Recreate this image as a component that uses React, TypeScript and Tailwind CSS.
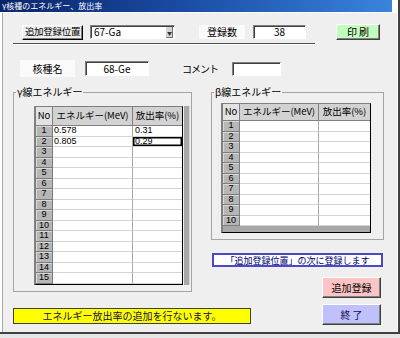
import React from 'react'

const raised =
  'flex items-center justify-center whitespace-nowrap border border-t-white border-l-white border-r-[#404040] border-b-[#404040] shadow-[inset_-1px_-1px_0_#808080]'
const sunken =
  'flex items-center border border-t-[#808080] border-l-[#808080] border-r-white border-b-white shadow-[inset_1px_1px_0_#404040] bg-white'

type GridProps = {
  rows: number
  head: string
  cols: [string, string, string]
  data: Record<number, [string, string]>
  focus?: number
  band?: boolean
}

function Grid({ rows, head, cols, data, focus, band }: GridProps) {
  const list = Array.from({ length: rows }, (_, i) => i + 1)
  return (
    <div className="flex flex-col border-l-2 border-t border-[#808080] border-r border-r-black border-b border-b-black">
      <div className={`flex ${head} border-b border-[#808080] text-[9.5px]`}>
        <div className={`${cols[0]} flex items-center justify-center bg-[#e2e2e2] border-r border-[#808080]`}>No</div>
        <div className={`${cols[1]} flex items-center justify-center bg-[#d2d2d2] border-r border-[#808080]`}>エネルギー(MeV)</div>
        <div className={`${cols[2]} flex items-center justify-center bg-[#d2d2d2]`}>放出率(%)</div>
      </div>
      {list.map((n) => (
        <div key={n} className="flex h-[10.5px] font-['Liberation_Sans',sans-serif] text-[9px] leading-[9px]">
          <div
            className={`${cols[0]} flex items-center justify-center bg-[#b6b6b6] border-r border-b border-[#7c7c7c] shadow-[inset_1px_1px_0_#d8d8d8]`}
          >
            {n}
          </div>
          <div className={`${cols[1]} flex items-center pl-px bg-white border-r border-r-[#a8a8a8] border-b border-b-[#d4d4d4]`}>
            {data[n]?.[0] ?? ''}
          </div>
          <div
            className={`${cols[2]} flex items-center pl-[2px] bg-white border-b border-b-[#d4d4d4] ${
              focus === n ? 'shadow-[inset_0_0_0_1.5px_#000]' : ''
            }`}
          >
            {data[n]?.[1] ?? ''}
          </div>
        </div>
      ))}
      {band && <div className="h-[6px] bg-[#a8a8a8]" />}
    </div>
  )
}

export default function App() {
  return (
    <div className="w-[400px] h-[338px] bg-[#e6e6e6] overflow-hidden font-['Noto_Sans_CJK_JP','Noto_Sans',sans-serif] text-[10px] leading-none text-black">
      <div className="flex h-[334px] flex-col bg-white border-r-2 border-r-[#404040] border-b-2 border-b-[#404040]">
        {/* title bar */}
        <div className="flex h-[13px] shrink-0 border-b border-white">
          <div className="flex w-[392px] items-center bg-gradient-to-r from-[#0a246a] via-[#1c4fa8] to-[#3a84dc] pl-[2px] text-[8px] text-white">
            γ核種のエネルギー、放出率
          </div>
        </div>

        <div className="flex flex-1 flex-col ml-[2px] mr-px bg-[#efefef] border-l border-[#a8a8a8]">
          {/* row 1 */}
          <div className="mt-[11px] flex h-[16px] items-center pl-[19px]">
            <div className={`${raised} h-[15px] w-[61px] border-l-black border-r-black border-b-black bg-[#efefef] text-[9.5px] tracking-[-0.3px]`}>
              追加登録位置
            </div>
            <div className={`${sunken} ml-[7px] h-[14px] w-[85px] justify-between pl-[3px]`}>
              <span>67-Ga</span>
              <span className="mr-px flex h-[11px] w-[7px] items-center justify-center bg-[#d4d4d4] text-[5px] text-[#303030] shadow-[inset_-1px_-1px_0_#707070]">
                ▼
              </span>
            </div>
            <div className="ml-[24px] flex h-[14px] w-[46px] items-center justify-center bg-[#fafafa]">登録数</div>
            <div className={`${sunken} ml-[8px] h-[14px] w-[53px] justify-center`}>38</div>
            <div className={`${raised} ml-[30px] h-[16px] w-[44px] bg-[#c4fcc0]`}>印 刷</div>
          </div>

          {/* separator */}
          <div className="ml-[10px] mt-[3px] h-[2px] w-[302px] border-t border-[#505050] border-b border-b-white" />

          {/* row 2 */}
          <div className="mt-[15px] flex h-[17px] items-center pl-[17px]">
            <div className="flex h-[17px] w-[55px] items-center justify-center bg-[#fafafa]">核種名</div>
            <div className={`${sunken} ml-[10px] h-[15px] w-[64px] justify-center`}>68-Ge</div>
            <div className="ml-[31px] flex w-[40px] items-center justify-center tracking-[-1px]">コメント</div>
            <div className={`${sunken} ml-[12px] h-[14px] w-[49px]`} />
          </div>

          {/* groups */}
          <div className="mt-[9px] flex items-start pl-[10px]">
            <fieldset className="h-[206px] w-[179px] border border-[#a4a4a4]">
              <legend className="ml-[2px] px-px leading-[12px]">γ線エネルギー</legend>
              <div className="ml-[20px] mt-[8px] flex">
                <Grid
                  rows={15}
                  head="h-[19px]"
                  cols={['w-[17px]', 'w-[80px]', 'w-[49px]']}
                  data={{ 1: ['0.578', '0.31'], 2: ['0.805', '0.29'] }}
                  focus={2}
                />
                <div className="ml-px w-[6px] bg-[#a8a8a8] border-r border-[#d8d8d8]" />
              </div>
            </fieldset>

            <div className="ml-[19px] flex w-[173px] flex-col">
              <fieldset className="h-[154px] w-[173px] border border-[#a4a4a4]">
                <legend className="ml-[2px] px-px leading-[12px]">β線エネルギー</legend>
                <div className="ml-[9px] mt-[5px] flex">
                  <Grid
                    rows={10}
                    head="h-[17px]"
                    cols={['w-[17px]', 'w-[79px]', 'w-[51px]']}
                    data={{}}
                    band
                  />
                </div>
              </fieldset>
              <div className="ml-px mt-[13px] flex h-[14px] w-[171px] items-center justify-center border-2 border-[#4a4ac8] bg-white text-[9px] text-[#000070]">
                「追加登録位置」の次に登録します
              </div>
              <div className={`${raised} ml-[111px] mt-[10px] h-[21px] w-[59px] bg-[#fcc4c4]`}>追加登録</div>
            </div>
          </div>

          {/* bottom row */}
          <div className="mt-[6px] flex items-start pl-[10px]">
            <div className="mt-[4px] flex h-[16px] w-[238px] items-center justify-center border border-[#404040] bg-[#ffff00] text-[#101050]">
              エネルギー放出率の追加を行ないます。
            </div>
            <div className={`${raised} ml-[71px] h-[21px] w-[59px] bg-[#c0c0fc] text-[#101050]`}>終 了</div>
          </div>
        </div>
      </div>
    </div>
  )
}
